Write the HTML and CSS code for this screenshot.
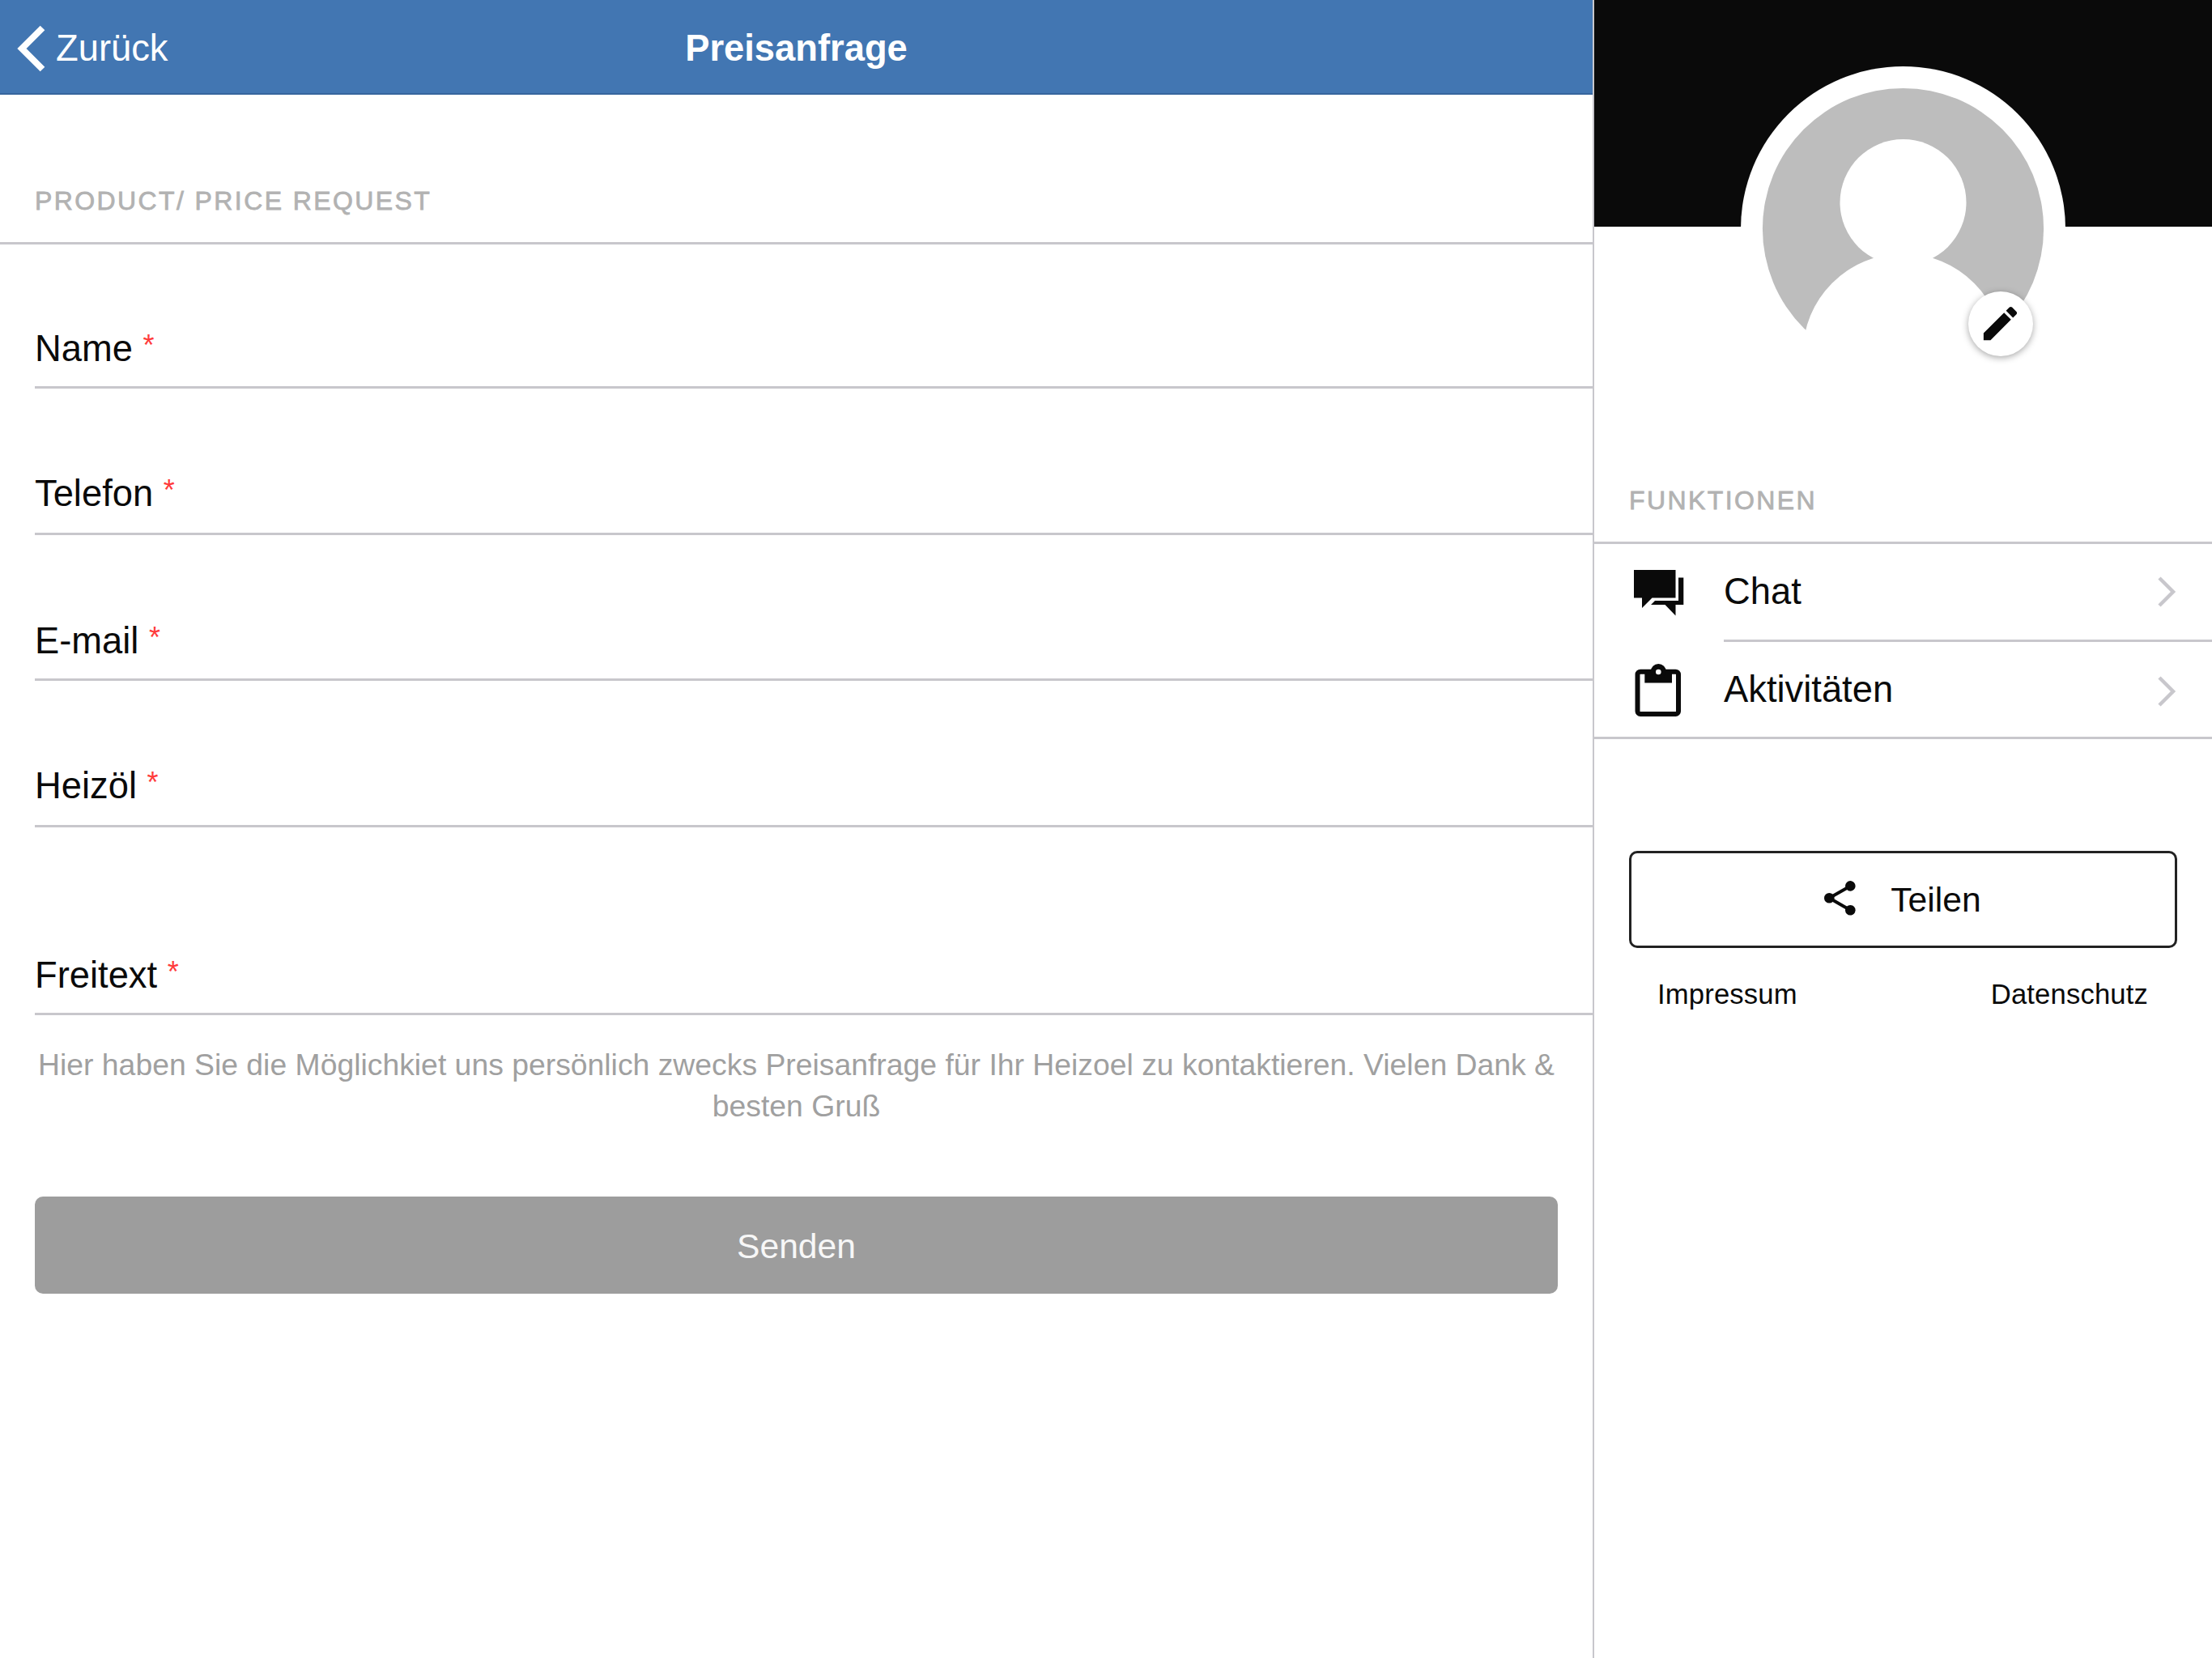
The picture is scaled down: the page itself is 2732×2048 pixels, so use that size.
FILE: index.html
```
<!DOCTYPE html>
<html lang="de">
  <head>
    <meta charset="UTF-8" />
    <meta name="viewport" content="width=device-width, initial-scale=1.0" />
    <title>Preisanfrage</title>
    <link rel="stylesheet" href="styles.css">
  </head>
  <body>
    <div class="app">
      <main class="content">
        <header class="toolbar">
          <a class="back" href="#">
            <svg class="back-icon" viewBox="0 0 36 60" aria-hidden="true">
              <path d="M31.500 4.500 6 30l25.500 25.500" fill="none" stroke="currentColor" stroke-width="8" />
            </svg>
            <span>Zurück</span>
          </a>
          <h1 class="title">Preisanfrage</h1>
        </header>

        <h2 class="list-header">Product/ Price Request</h2>
        <form class="form">
          <div class="field"><label>Name <span class="required">*</span></label></div>
          <div class="field"><label>Telefon <span class="required">*</span></label></div>
          <div class="field"><label>E-mail <span class="required">*</span></label></div>
          <div class="field"><label>Heizöl <span class="required">*</span></label></div>
          <div class="field field-textarea"><label>Freitext <span class="required">*</span></label></div>
        </form>
        <p class="hint">
          Hier haben Sie die Möglichkiet uns persönlich zwecks Preisanfrage für
          Ihr Heizoel zu kontaktieren. Vielen Dank &amp; besten Gruß
        </p>
        <button class="submit" type="button">Senden</button>
      </main>

      <aside class="sidebar">
        <div class="cover"></div>
        <div class="avatar">
          <svg class="avatar-image" viewBox="0 0 401 401" aria-hidden="true">
            <circle cx="200.5" cy="200.5" r="200.5" fill="#fff" />
            <circle cx="200.5" cy="200.5" r="173.6" fill="#bdbdbd" />
            <circle cx="200.5" cy="168" r="78" fill="#fff" />
            <circle cx="200.5" cy="355.4" r="124" fill="#fff" />
          </svg>
          <button class="edit" type="button" aria-label="Bearbeiten">
            <svg class="edit-icon" viewBox="0 0 512 512" aria-hidden="true">
              <path d="M64 368v80h80l235.700-235.700-80-80L64 368zM441.600 150.400c8.500-8.500 8.500-21.300 0-29.900l-50.100-50.100c-8.500-8.500-21.300-8.500-29.900 0l-39.500 39.500 80 80 39.500-39.500z" />
            </svg>
          </button>
        </div>

        <h2 class="list-header side-header">Funktionen</h2>
        <nav class="menu">
          <a class="item" href="#">
            <svg class="item-icon" viewBox="0 0 76 76" aria-hidden="true">
              <path d="M6 11h51.500v34.500H28.500L16 58V45.500H6z" />
              <path d="M61 20.500h6.300V54h-9.800v13.500L44.500 54H27l5-5h29z" />
            </svg>
            <span class="item-inner">
              Chat
              <svg class="arrow" viewBox="0 0 24 40" aria-hidden="true"><path d="m3 3 17 17L3 37" /></svg>
            </span>
          </a>
          <a class="item" href="#">
            <svg class="item-icon" viewBox="0 0 76 76" aria-hidden="true">
              <rect x="10.500" y="15.700" width="50.500" height="52.300" rx="3.500" fill="none" stroke="currentColor" stroke-width="6" />
              <path d="M19.300 14.500H53v15H19.300z" />
              <circle cx="36.300" cy="15.500" r="9.500" />
              <circle cx="36.300" cy="16" r="3.300" fill="#fff" />
            </svg>
            <span class="item-inner">
              Aktivitäten
              <svg class="arrow" viewBox="0 0 24 40" aria-hidden="true"><path d="m3 3 17 17L3 37" /></svg>
            </span>
          </a>
        </nav>

        <button class="share" type="button">
          <svg class="share-icon" viewBox="0 0 40 46" aria-hidden="true">
            <path d="M33.300 6.400 7.300 21.300l26 15" fill="none" stroke="currentColor" stroke-width="4" />
            <circle cx="7.300" cy="21.300" r="6.300" />
            <circle cx="33.300" cy="6.400" r="6.300" />
            <circle cx="33.300" cy="36.300" r="6.300" />
          </svg>
          Teilen
        </button>
        <footer class="links">
          <a href="#">Impressum</a>
          <a href="#">Datenschutz</a>
        </footer>
      </aside>
    </div>
  </body>
</html>
```
FILE: styles.css
```
*,
*::before,
*::after {
  box-sizing: border-box;
}

body {
  margin: 0;
  font-family: "Liberation Sans", Arial, sans-serif;
  font-size: 45.33px;
  color: #0a0a0a;
  background: #fff;
}

a {
  color: inherit;
  text-decoration: none;
}

button {
  font-family: inherit;
  padding: 0;
}

svg {
  display: block;
  flex: none;
  fill: currentColor;
}

.app {
  display: grid;
  grid-template-columns: 1967px 1fr;
  min-height: 100vh;
}

/* Toolbar */
.toolbar {
  display: grid;
  grid-template-columns: 1fr auto 1fr;
  align-items: center;
  height: 117px;
  padding-top: 4px;
  background: #4276b2;
  border-bottom: 2px solid #36659c;
  color: #fff;
}

.back {
  display: flex;
  align-items: center;
  gap: 11px;
  padding-left: 20px;
}

.back-icon {
  width: 38px;
  height: 60px;
}

.title {
  margin: 0;
  font-size: 45.33px;
  font-weight: bold;
}

/* Form */
.list-header {
  display: flex;
  align-items: flex-end;
  height: 185px;
  margin: 0;
  padding: 0 43px 30px;
  border-bottom: 3px solid #c8c7cc;
  font-size: 32px;
  font-weight: normal;
  line-height: 42px;
  letter-spacing: 2.4px;
  text-transform: uppercase;
  color: #b2b2b2;
  -webkit-text-stroke: 0.8px #b2b2b2;
}

.form {
  padding-left: 43px;
}

.field {
  display: flex;
  align-items: flex-end;
  height: 180px;
  padding-bottom: 21px;
  border-bottom: 3px solid #c8c7cc;
  line-height: 50px;
}

.field:first-child {
  height: 178px;
}

.field:nth-child(even) {
  height: 181px;
  padding-bottom: 23px;
}

.field.field-textarea {
  height: 232px;
}

.required {
  font-size: 36px;
  line-height: 0;
  vertical-align: 7px;
  color: #ff3b3b;
}

.hint {
  margin: 36px 43px 86px;
  font-size: 37.33px;
  line-height: 51px;
  text-align: center;
  color: #a0a0a0;
}

.submit {
  display: block;
  width: 1881px;
  height: 120px;
  margin: 0 43px;
  padding-top: 3px;
  border: 0;
  border-radius: 10px;
  background: #9d9d9d;
  color: #f7f7f7;
  font-size: 42.67px;
}

/* Sidebar */
.sidebar {
  border-left: 2px solid #c8c7cc;
}

.cover {
  height: 280px;
  background: #0a0a0a;
}

.avatar {
  position: relative;
  width: 401px;
  height: 401px;
  margin: -198px auto 0;
}

.avatar-image {
  width: 401px;
  height: 401px;
}

.edit {
  position: absolute;
  right: 40px;
  bottom: 43px;
  display: flex;
  align-items: center;
  justify-content: center;
  width: 80px;
  height: 80px;
  padding: 0 2px 2px 0;
  border: 0;
  border-radius: 50%;
  background: #fff;
  color: #0a0a0a;
  box-shadow: 0 2px 9px rgba(0, 0, 0, 0.35);
}

.edit-icon {
  width: 55px;
  height: 55px;
}

.side-header {
  height: 189px;
}

.menu {
  border-bottom: 3px solid #c8c7cc;
}

.item {
  display: flex;
  align-items: center;
  padding-left: 43px;
}

.item-icon {
  width: 76px;
  height: 76px;
}

.item:first-child .item-icon {
  margin-bottom: 4px;
}

.item-inner {
  display: flex;
  flex: 1;
  align-items: center;
  justify-content: space-between;
  height: 117px;
  margin-left: 41px;
  padding-right: 44px;
}

.item:first-child .item-inner {
  height: 121px;
  border-bottom: 3px solid #c8c7cc;
}

.arrow {
  width: 24px;
  height: 40px;
  fill: none;
  stroke: #c8c7cc;
  stroke-width: 4.500;
}

.item:last-child .arrow {
  margin-top: 4px;
}

.share {
  display: flex;
  align-items: center;
  justify-content: center;
  gap: 43px;
  width: 677px;
  height: 120px;
  margin: 138px auto 0;
  padding-right: 2px;
  border: 3px solid #222;
  border-radius: 10px;
  background: transparent;
  color: #0a0a0a;
  font-size: 42.67px;
}

.share-icon {
  width: 40px;
  height: 46px;
}

.links {
  display: flex;
  justify-content: space-between;
  margin: 36px 79px 0 78px;
  font-size: 34.67px;
  line-height: 42px;
  letter-spacing: 0.15px;
}
```
